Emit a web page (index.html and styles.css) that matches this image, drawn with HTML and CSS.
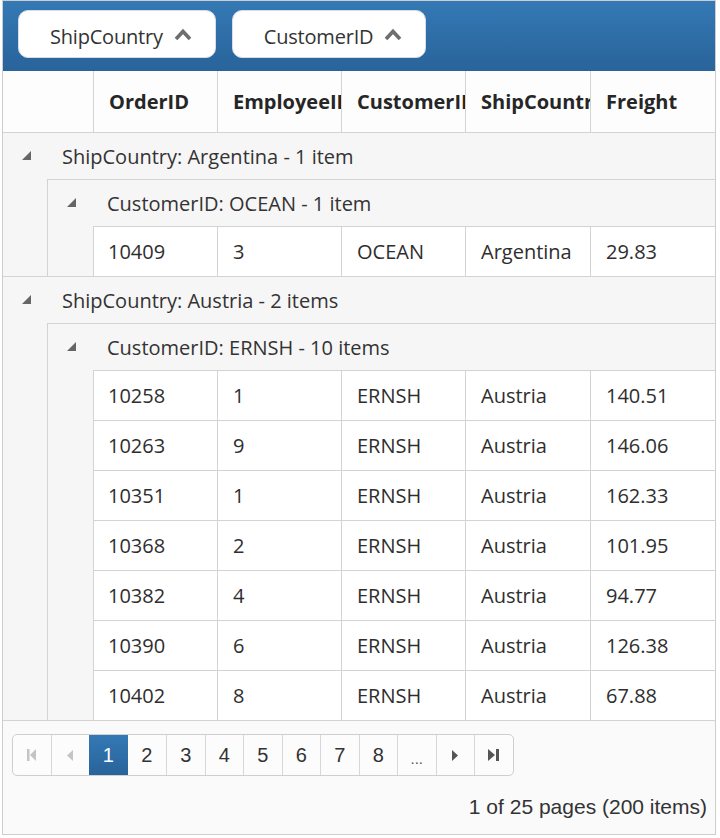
FILE: index.html
```html
<!DOCTYPE html>
<html>
<head>
<meta charset="utf-8">
<link rel="stylesheet" href="styles.css">
</head>
<body>
<div class="grid">
  <div class="toolbar">
    <div class="chip"><span>ShipCountry</span><svg class="chev" width="18" height="13" viewBox="0 0 18 13"><path d="M2 11 L9 3.5 L16 11" fill="none" stroke="#6e6e6e" stroke-width="3.6"/></svg></div>
    <div class="chip"><span>CustomerID</span><svg class="chev" width="18" height="13" viewBox="0 0 18 13"><path d="M2 11 L9 3.5 L16 11" fill="none" stroke="#6e6e6e" stroke-width="3.6"/></svg></div>
  </div>
  <div class="head">
    <div class="hindent"></div>
    <div class="hcell c1">OrderID</div>
    <div class="hcell c2">EmployeeID</div>
    <div class="hcell c3">CustomerID</div>
    <div class="hcell c4">ShipCountry</div>
    <div class="hcell c5">Freight</div>
  </div>

  <div class="group">
    <div class="ghead"><svg class="tri" width="9" height="9" viewBox="0 0 9 9"><polygon points="9,0 9,9 0,9" fill="#666"/></svg><span>ShipCountry: Argentina - 1 item</span></div>
    <div class="gbody">
      <div class="indent"></div>
      <div class="gcontent">
        <div class="shead"><svg class="tri" width="9" height="9" viewBox="0 0 9 9"><polygon points="9,0 9,9 0,9" fill="#666"/></svg><span>CustomerID: OCEAN - 1 item</span></div>
        <div class="sbody">
          <div class="indent2"></div>
          <div class="rows">
            <div class="row"><div class="cell c1">10409</div><div class="cell c2">3</div><div class="cell c3">OCEAN</div><div class="cell c4">Argentina</div><div class="cell c5">29.83</div></div>
          </div>
        </div>
      </div>
    </div>
  </div>

  <div class="group">
    <div class="ghead"><svg class="tri" width="9" height="9" viewBox="0 0 9 9"><polygon points="9,0 9,9 0,9" fill="#666"/></svg><span>ShipCountry: Austria - 2 items</span></div>
    <div class="gbody">
      <div class="indent"></div>
      <div class="gcontent">
        <div class="shead"><svg class="tri" width="9" height="9" viewBox="0 0 9 9"><polygon points="9,0 9,9 0,9" fill="#666"/></svg><span>CustomerID: ERNSH - 10 items</span></div>
        <div class="sbody">
          <div class="indent2"></div>
          <div class="rows">
            <div class="row"><div class="cell c1">10258</div><div class="cell c2">1</div><div class="cell c3">ERNSH</div><div class="cell c4">Austria</div><div class="cell c5">140.51</div></div>
            <div class="row"><div class="cell c1">10263</div><div class="cell c2">9</div><div class="cell c3">ERNSH</div><div class="cell c4">Austria</div><div class="cell c5">146.06</div></div>
            <div class="row"><div class="cell c1">10351</div><div class="cell c2">1</div><div class="cell c3">ERNSH</div><div class="cell c4">Austria</div><div class="cell c5">162.33</div></div>
            <div class="row"><div class="cell c1">10368</div><div class="cell c2">2</div><div class="cell c3">ERNSH</div><div class="cell c4">Austria</div><div class="cell c5">101.95</div></div>
            <div class="row"><div class="cell c1">10382</div><div class="cell c2">4</div><div class="cell c3">ERNSH</div><div class="cell c4">Austria</div><div class="cell c5">94.77</div></div>
            <div class="row"><div class="cell c1">10390</div><div class="cell c2">6</div><div class="cell c3">ERNSH</div><div class="cell c4">Austria</div><div class="cell c5">126.38</div></div>
            <div class="row"><div class="cell c1">10402</div><div class="cell c2">8</div><div class="cell c3">ERNSH</div><div class="cell c4">Austria</div><div class="cell c5">67.88</div></div>
          </div>
        </div>
      </div>
    </div>
  </div>

  <div class="pager">
    <div class="pnums">
      <div class="pbtn dis"><svg width="9" height="12" viewBox="0 0 9 12"><rect x="0" y="0" width="2.5" height="12" fill="#c4c4c4"/><polygon points="9,0 9,12 3,6" fill="#c4c4c4"/></svg></div>
      <div class="pbtn dis"><svg width="6" height="11" viewBox="0 0 6 11"><polygon points="6,0 6,11 0,5.5" fill="#c4c4c4"/></svg></div>
      <div class="pbtn sel">1</div>
      <div class="pbtn">2</div>
      <div class="pbtn">3</div>
      <div class="pbtn">4</div>
      <div class="pbtn">5</div>
      <div class="pbtn">6</div>
      <div class="pbtn">7</div>
      <div class="pbtn">8</div>
      <div class="pbtn more">...</div>
      <div class="pbtn"><svg width="6" height="11" viewBox="0 0 6 11"><polygon points="0,0 0,11 6,5.5" fill="#555"/></svg></div>
      <div class="pbtn"><svg width="11" height="12" viewBox="0 0 11 12"><polygon points="0,0 0,12 7,6" fill="#555"/><rect x="8" y="0" width="3" height="12" fill="#555"/></svg></div>
    </div>
    <div class="pinfo">1 of 25 pages (200 items)</div>
  </div>
</div>
</body>
</html>
```

FILE: styles.css
```css
* { box-sizing: border-box; }
html, body { margin: 0; padding: 0; background: #fff; }
body { padding-left: 2px; }

.grid {
  width: 714px;
  height: 835px;
  border: 1px solid #cdcdcd;
  font-family: "Open Sans", "Noto Sans", sans-serif;
  font-size: 20px;
  color: #2e2e2e;
  overflow: hidden;
}

.toolbar {
  height: 70px;
  background: linear-gradient(to bottom, #3479b5, #29639a);
  display: flex;
  align-items: flex-start;
  padding: 9px 0 0 15px;
  gap: 16px;
}
.chip {
  height: 48px;
  background: #fff;
  border: 1px solid #d6dde6;
  border-radius: 10px;
  display: flex;
  align-items: center;
  padding: 3px 23px 0 31px;
  font-size: 20px;
  color: #333;
}
.chip span { margin-right: 11px; letter-spacing: -0.2px; padding-top: 2px; }
.chev { display: block; margin-top: -2px; }

.head {
  display: flex;
  height: 62px;
  background: #fdfdfd;
  border-bottom: 1px solid #d3d3d3;
}
.hindent { width: 90px; flex: none; }
.hcell {
  border-left: 1px solid #d3d3d3;
  padding-left: 15px;
  font-weight: 700;
  white-space: nowrap;
  overflow: hidden;
  display: flex;
  align-items: center;
  flex: none;
  width: 124px;
  color: #262626;
}
.hcell.c4 { width: 125px; }
.hcell.c5 { flex: 1; width: auto; }

.group {
  background: #f6f6f6;
  border-bottom: 1px solid #d3d3d3;
}
.ghead, .shead {
  height: 46px;
  display: flex;
  align-items: center;
  padding-left: 19px;
  white-space: nowrap;
  color: #333;
}
.tri { display: block; flex: none; margin-right: 31px; margin-top: -1px; }
.gbody { display: flex; }
.indent { width: 45px; flex: none; border-right: 1px solid #d3d3d3; }
.gcontent { flex: 1; border-top: 1px solid #d3d3d3; }
.sbody { display: flex; }
.indent2 { width: 46px; flex: none; border-right: 1px solid #d3d3d3; }
.rows { flex: 1; background: #fff; }
.row {
  display: flex;
  height: 50px;
  border-top: 1px solid #d3d3d3;
}
.cell {
  flex: none;
  width: 124px;
  border-left: 1px solid #d3d3d3;
  padding-left: 15px;
  display: flex;
  align-items: center;
  white-space: nowrap;
  overflow: hidden;
  color: #2e2e2e;
}
.cell.c1 { width: 123px; border-left: none; padding-left: 14px; }
.cell.c4 { width: 125px; }
.cell.c5 { flex: 1; width: auto; }

.pager {
  height: 113px;
  background: #fafafa;
  padding: 13px 0 0 9px;
  font-family: "Liberation Sans", Arial, sans-serif;
}
.pnums {
  display: inline-flex;
  border: 1px solid #cfcfcf;
  border-radius: 5px;
  height: 42px;
  overflow: hidden;
  background: #fcfcfc;
}
.pbtn {
  width: 38.5px;
  display: flex;
  align-items: center;
  justify-content: center;
  border-left: 1px solid #d8d8d8;
  font-size: 20px;
  color: #333;
}
.pbtn:first-child { width: 37.5px; border-left: none; }
.pbtn.sel {
  background: linear-gradient(to bottom, #3479b5, #29639a);
  color: #fff;
  border-left: none;
}
.pbtn.sel + .pbtn { border-left: none; }
.pbtn.more { font-size: 15px; padding-top: 6px; color: #555; }
.pinfo {
  text-align: right;
  padding-right: 8px;
  margin-top: 19px;
  font-size: 21px;
  color: #333;
}
```
